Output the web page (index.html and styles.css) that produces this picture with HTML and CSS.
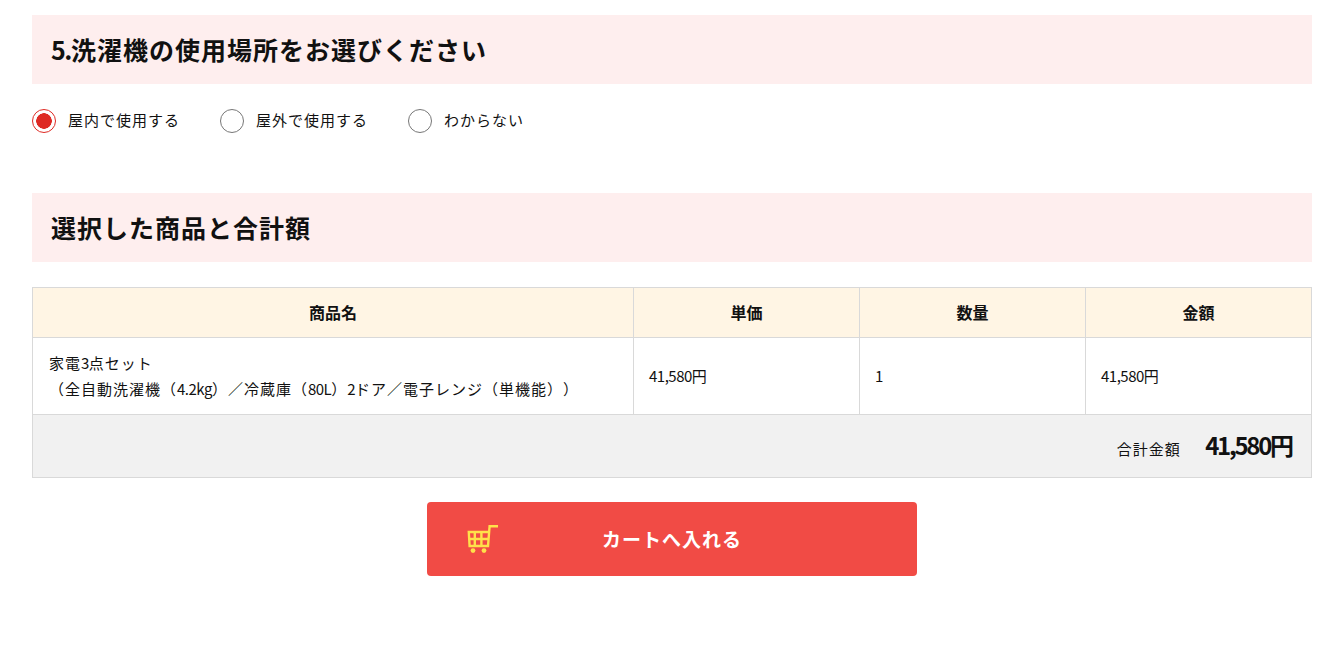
FILE: index.html
```html
<!DOCTYPE html>
<html lang="ja">
<head>
    <meta charset="UTF-8">
    <meta name="viewport" content="width=device-width, initial-scale=1.0">
    <title>カート</title>
    <link rel="stylesheet" href="styles.css">
</head>
<body>

    <main class="wrap">
        <h2 class="section-title"><span class="title-num">5.</span>洗濯機の使用場所をお選びください</h2>

        <div class="radio-group">
            <label class="radio-item">
                <input type="radio" name="place" checked>
                <span class="radio-text">屋内で使用する</span>
            </label>
            <label class="radio-item">
                <input type="radio" name="place">
                <span class="radio-text">屋外で使用する</span>
            </label>
            <label class="radio-item">
                <input type="radio" name="place">
                <span class="radio-text">わからない</span>
            </label>
        </div>

        <h2 class="section-title">選択した商品と合計額</h2>

        <table class="cart-table">
            <thead>
                <tr>
                    <th class="col-name">商品名</th>
                    <th class="col-num">単価</th>
                    <th class="col-num">数量</th>
                    <th class="col-num">金額</th>
                </tr>
            </thead>
            <tbody>
                <tr>
                    <td>家電<span class="num">3</span>点セット<br>（全自動洗濯機（<span class="num">4.2kg</span>）／冷蔵庫（<span class="num">80L</span>）<span class="num">2</span>ドア／電子レンジ（単機能））</td>
                    <td><span class="num">41,580</span>円</td>
                    <td><span class="num">1</span></td>
                    <td><span class="num">41,580</span>円</td>
                </tr>
            </tbody>
            <tfoot>
                <tr>
                    <td colspan="4" class="total">
                        <span class="total-label">合計金額</span>
                        <strong class="total-price"><span class="price-num">41,580</span>円</strong>
                    </td>
                </tr>
            </tfoot>
        </table>

        <div class="cart-action">
            <button class="cart-button" type="button">
                <svg class="cart-icon" width="32" height="29" viewBox="0 0 32 29" fill="none" stroke="#ffe14a" stroke-width="2.400">
                    <path d="M31 1.200H22.600L21 21H2.600L1.800 7H21.800"/>
                    <path d="M2 14H21M7.800 7V21M14.400 7V21"/>
                    <circle cx="6" cy="25.600" r="2.400" fill="#ffe14a" stroke="none"/>
                    <circle cx="17" cy="25.600" r="2.400" fill="#ffe14a" stroke="none"/>
                </svg>
                カートへ入れる
            </button>
        </div>
    </main>

</body>
</html>
```

FILE: styles.css
```css
body {
    margin: 0;
    background-color: #fff;
    color: #111;
    font-family: "Noto Sans CJK JP", "Noto Sans", sans-serif;
    text-spacing-trim: space-all;
}

.wrap {
    width: 1280px;
    margin-left: 32px;
    padding-top: 15px;
}

.section-title {
    margin: 0;
    height: 69px;
    padding-left: 19px;
    background-color: #feeeee;
    font-size: 25px;
    font-weight: 700;
    line-height: 68px;
    letter-spacing: 1px;
}

.title-num {
    letter-spacing: -1.500px;
}

.radio-group {
    display: flex;
    align-items: center;
    height: 24px;
    margin: 25px 0 60px;
}

.radio-item {
    display: flex;
    align-items: center;
    gap: 12px;
    margin-right: 40px;
    font-size: 15px;
    line-height: 22px;
    letter-spacing: 1px;
}

.radio-text {
    padding-bottom: 3px;
}

.radio-item input {
    appearance: none;
    flex: none;
    width: 24px;
    height: 24px;
    margin: 0;
    border: 1px solid #777;
    border-radius: 50%;
    background-color: #fff;
}

.radio-item input:checked {
    border-color: #de2a24;
    background: radial-gradient(circle, #de2a24 0, #de2a24 7.500px, #fff 8px);
}

.cart-table {
    width: 1280px;
    margin-top: 25px;
    border-collapse: collapse;
    table-layout: fixed;
    font-size: 15px;
    letter-spacing: 1px;
}

.cart-table th,
.cart-table td {
    box-sizing: border-box;
    border: 1px solid #d9d9d9;
}

.cart-table th {
    height: 50px;
    padding: 0 0 2px;
    background-color: #fff5e4;
    font-size: 16px;
    font-weight: 700;
    letter-spacing: 0;
    text-align: center;
}

.col-name {
    width: 601px;
}

.col-num {
    width: 226px;
}

.cart-table td {
    height: 77px;
    padding: 0 16px;
    line-height: 26px;
}

.cart-table td + td {
    padding-left: 15px;
}

.num {
    letter-spacing: -0.500px;
}

.cart-table .total {
    height: 63px;
    padding: 2px 17px 0 0;
    background-color: #f1f1f1;
    text-align: right;
}

.total-label {
    margin-right: 20px;
}

.total-price {
    font-size: 24px;
    font-weight: 700;
    letter-spacing: 0;
}

.price-num {
    letter-spacing: -2.300px;
}

.cart-action {
    display: flex;
    justify-content: center;
    margin-top: 24px;
}

.cart-button {
    position: relative;
    width: 490px;
    height: 74px;
    padding-bottom: 3px;
    border: none;
    border-radius: 4px;
    background-color: #f14b45;
    color: #fff;
    font-family: inherit;
    font-size: 19px;
    font-weight: 700;
    letter-spacing: 1px;
}

.cart-icon {
    position: absolute;
    left: 40px;
    top: 23px;
}
```
